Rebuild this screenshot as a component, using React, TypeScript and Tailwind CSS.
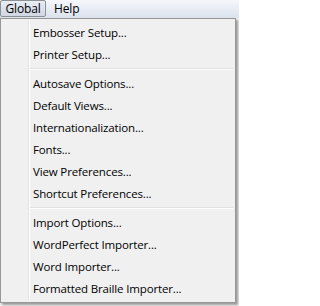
import React from "react";

const groups: string[][] = [
  ["Embosser Setup...", "Printer Setup..."],
  [
    "Autosave Options...",
    "Default Views...",
    "Internationalization...",
    "Fonts...",
    "View Preferences...",
    "Shortcut Preferences...",
  ],
  ["Import Options...", "WordPerfect Importer...", "Word Importer...", "Formatted Braille Importer..."],
];

export default function App() {
  return (
    <div
      className="w-[239px] h-[306px] bg-[#f0f0f0] overflow-hidden text-[11.5px] tracking-[-0.15px] text-black"
      style={{ fontFamily: '"Open Sans", "Noto Sans", sans-serif' }}
    >
      <div className="h-[18px] flex items-stretch bg-gradient-to-b from-[#f5f7fb] to-[#dbe2ed]">
        <div className="w-[46px] h-[17px] flex items-center justify-center rounded-[2px] border border-[#8c8f94] bg-gradient-to-b from-[#e9edf4] to-[#cfd7e3] leading-none text-[12px]">
          Global
        </div>
        <div className="pl-[8px] flex items-center leading-none h-[17px] text-[12px]">Help</div>
      </div>
      <div className="flex">
        <div className="w-[236px] h-[285px] border border-[#979797] bg-[#f0f0f0] flex flex-col p-[2px] shadow-[2px_2px_2px_rgba(0,0,0,0.35)]">
          <div className="flex-1 flex">
            <div className="w-[26px] shrink-0 border-r border-r-[#e2e3e3] bg-[#f0f0f0]" />
            <div className="flex-1 border-l border-l-white flex flex-col">
              {groups.map((g, gi) => (
                <div key={gi} className="flex flex-col">
                  {gi > 0 && (
                    <div className="h-[7px] flex flex-col justify-center">
                      <div className="h-px bg-[#e0e0e0]" />
                      <div className="h-px bg-white" />
                    </div>
                  )}
                  {g.map((t) => (
                    <div key={t} className="h-[22px] flex items-center pl-[3px] leading-none pt-[1px]">
                      {t}
                    </div>
                  ))}
                </div>
              ))}
            </div>
          </div>
        </div>
      </div>
    </div>
  );
}
